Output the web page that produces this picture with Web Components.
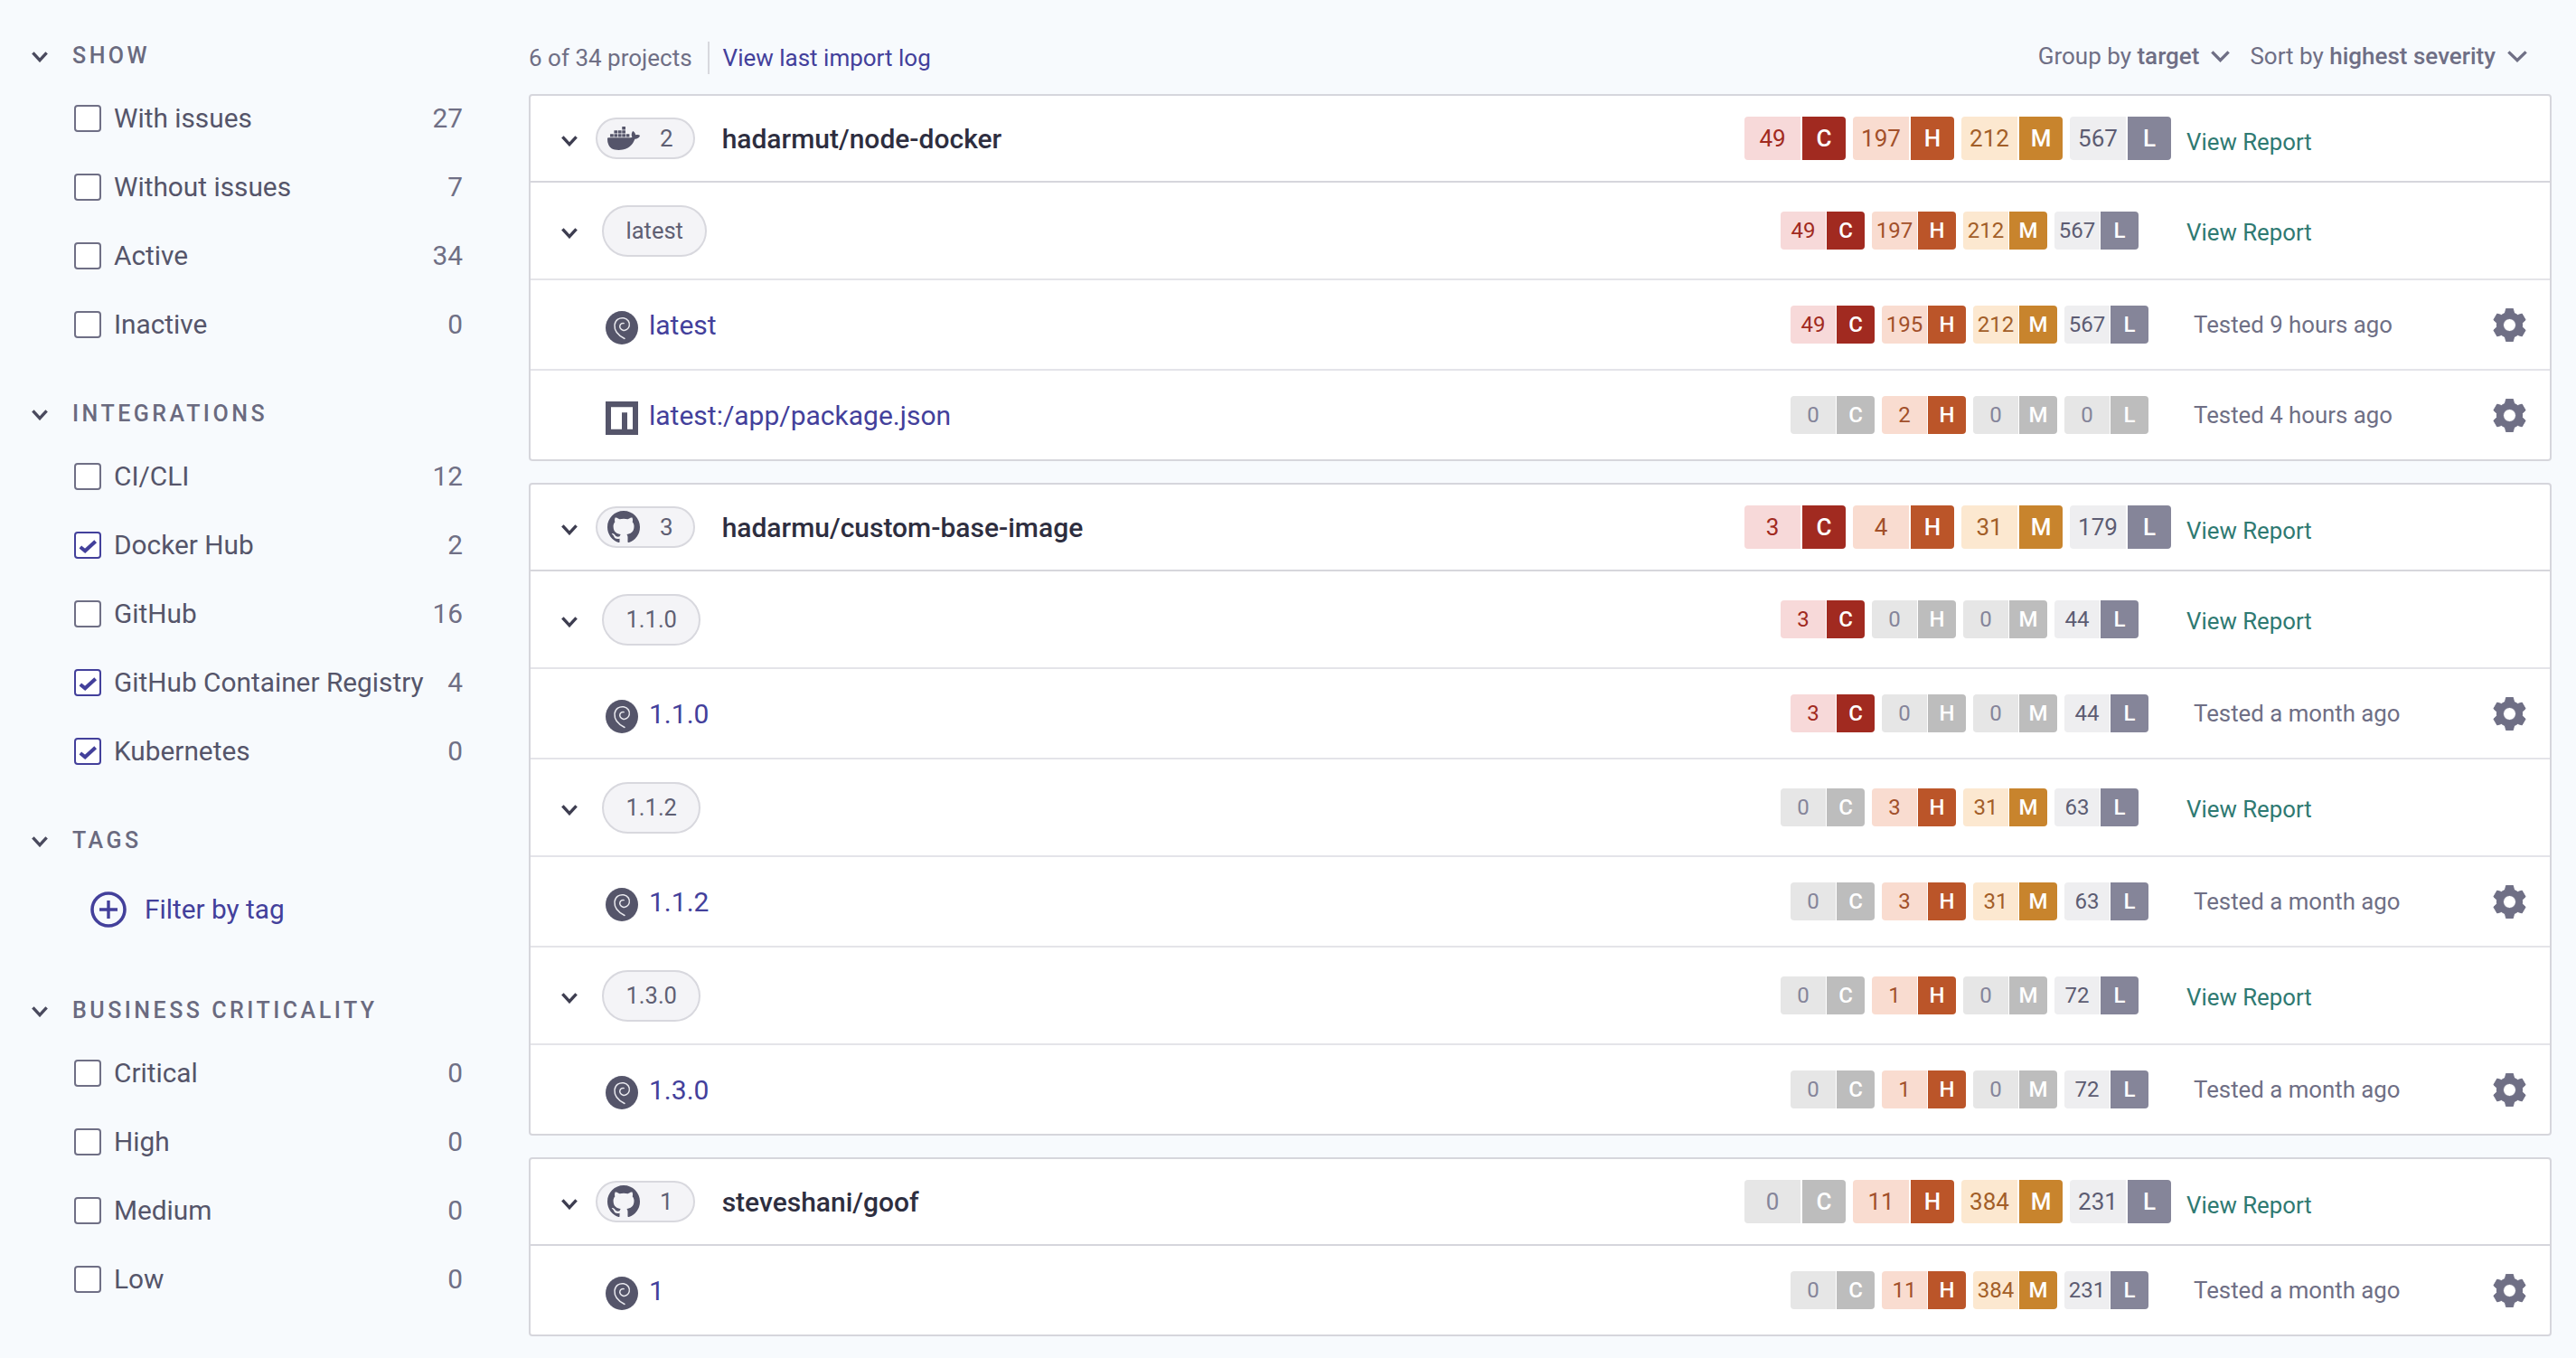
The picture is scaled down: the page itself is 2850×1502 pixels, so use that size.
<!DOCTYPE html>
<html><head><meta charset="utf-8">
<style>
html,body{margin:0;padding:0;background:#f7fafd;font-family:Roboto,"Liberation Sans",sans-serif;color:#55556a}
body{height:1502px;overflow:hidden}
</style></head><body>
<x-app>
  <x-filter-section slot="side" heading="SHOW" style="margin-bottom:41px">
    <x-check count="27">With issues</x-check>
    <x-check count="7">Without issues</x-check>
    <x-check count="34">Active</x-check>
    <x-check count="0">Inactive</x-check>
  </x-filter-section>
  <x-filter-section slot="side" heading="INTEGRATIONS" style="margin-bottom:41px">
    <x-check count="12">CI/CLI</x-check>
    <x-check count="2" checked>Docker Hub</x-check>
    <x-check count="16">GitHub</x-check>
    <x-check count="4" checked>GitHub Container Registry</x-check>
    <x-check count="0" checked>Kubernetes</x-check>
  </x-filter-section>
  <x-filter-section slot="side" heading="TAGS" gap="18" style="margin-bottom:54px">
    <x-add-filter>Filter by tag</x-add-filter>
  </x-filter-section>
  <x-filter-section slot="side" heading="BUSINESS CRITICALITY">
    <x-check count="0">Critical</x-check>
    <x-check count="0">High</x-check>
    <x-check count="0">Medium</x-check>
    <x-check count="0">Low</x-check>
  </x-filter-section>

  <x-topbar slot="main"></x-topbar>

  <x-card slot="main">
    <x-row kind="project" icon="docker" count="2" sev="49,197,212,567">hadarmut/node-docker</x-row>
    <x-row kind="tag" sev="49,197,212,567">latest</x-row>
    <x-row kind="leaf" icon="debian" sev="49,195,212,567" tested="Tested 9 hours ago">latest</x-row>
    <x-row kind="leaf" icon="npm" sev="0,2,0,0" tested="Tested 4 hours ago" last>latest:/app/package.json</x-row>
  </x-card>
  <x-card slot="main">
    <x-row kind="project" icon="github" count="3" sev="3,4,31,179">hadarmu/custom-base-image</x-row>
    <x-row kind="tag" sev="3,0,0,44">1.1.0</x-row>
    <x-row kind="leaf" icon="debian" sev="3,0,0,44" tested="Tested a month ago">1.1.0</x-row>
    <x-row kind="tag" sev="0,3,31,63">1.1.2</x-row>
    <x-row kind="leaf" icon="debian" sev="0,3,31,63" tested="Tested a month ago">1.1.2</x-row>
    <x-row kind="tag" sev="0,1,0,72">1.3.0</x-row>
    <x-row kind="leaf" icon="debian" sev="0,1,0,72" tested="Tested a month ago" last>1.3.0</x-row>
  </x-card>
  <x-card slot="main">
    <x-row kind="project" icon="github" count="1" sev="0,11,384,231">steveshani/goof</x-row>
    <x-row kind="leaf" icon="debian" sev="0,11,384,231" tested="Tested a month ago" last>1</x-row>
  </x-card>
</x-app>
<script>
const ICONS={
 docker:'<svg viewBox="0 0 24 24" width="36" height="36" fill="#55556a"><path d="M13.983 11.078h2.119a.186.186 0 00.186-.185V9.006a.186.186 0 00-.186-.186h-2.119a.185.185 0 00-.185.185v1.888c0 .102.083.185.185.185m-2.954-5.43h2.118a.186.186 0 00.186-.186V3.574a.186.186 0 00-.186-.185h-2.118a.185.185 0 00-.185.185v1.888c0 .102.082.185.185.186m0 2.716h2.118a.187.187 0 00.186-.186V6.29a.186.186 0 00-.186-.185h-2.118a.185.185 0 00-.185.185v1.887c0 .102.082.185.185.186m-2.93 0h2.12a.186.186 0 00.184-.186V6.29a.185.185 0 00-.185-.185H8.1a.185.185 0 00-.185.185v1.887c0 .102.083.185.185.186m-2.964 0h2.119a.186.186 0 00.185-.186V6.29a.185.185 0 00-.185-.185H5.136a.186.186 0 00-.186.185v1.887c0 .102.084.185.186.186m5.893 2.715h2.118a.186.186 0 00.186-.185V9.006a.186.186 0 00-.186-.186h-2.118a.185.185 0 00-.185.185v1.888c0 .102.082.185.185.185m-2.93 0h2.12a.185.185 0 00.184-.185V9.006a.185.185 0 00-.184-.186h-2.12a.185.185 0 00-.184.185v1.888c0 .102.083.185.185.185m-2.964 0h2.119a.185.185 0 00.185-.185V9.006a.185.185 0 00-.184-.186h-2.12a.186.186 0 00-.186.186v1.887c0 .102.084.185.186.185m-2.92 0h2.12a.185.185 0 00.184-.185V9.006a.185.185 0 00-.184-.186h-2.12a.185.185 0 00-.185.185v1.888c0 .102.082.185.185.185M23.763 9.89c-.065-.051-.672-.51-1.954-.51-.338.001-.676.03-1.01.087-.248-1.7-1.653-2.53-1.716-2.566l-.344-.199-.226.327c-.284.438-.49.922-.612 1.43-.23.97-.09 1.882.403 2.661-.595.332-1.55.413-1.744.42H.751a.751.751 0 00-.75.748 11.376 11.376 0 00.692 4.062c.545 1.428 1.355 2.48 2.41 3.124 1.18.723 3.1 1.137 5.275 1.137.983.003 1.963-.086 2.93-.266a12.248 12.248 0 003.823-1.389c.98-.567 1.86-1.288 2.61-2.136 1.252-1.418 1.998-2.997 2.553-4.4h.221c1.372 0 2.215-.549 2.68-1.009.309-.293.55-.65.707-1.046l.098-.288Z"/></svg>',
 github:'<svg viewBox="0 0 16 16" width="36" height="36" fill="#55556a"><path d="M8 0C3.58 0 0 3.58 0 8c0 3.54 2.29 6.53 5.47 7.59.4.07.55-.17.55-.38 0-.19-.01-.82-.01-1.49-2.01.37-2.53-.49-2.69-.94-.09-.23-.48-.94-.82-1.13-.28-.15-.68-.52-.01-.53.63-.01 1.08.58 1.23.82.72 1.21 1.87.87 2.33.66.07-.52.28-.87.51-1.07-1.78-.2-3.64-.89-3.64-3.95 0-.87.31-1.59.82-2.15-.08-.2-.36-1.02.08-2.12 0 0 .67-.21 2.2.82.64-.18 1.32-.27 2-.27.68 0 1.36.09 2 .27 1.53-1.04 2.2-.82 2.2-.82.44 1.1.16 1.92.08 2.12.51.56.82 1.27.82 2.15 0 3.07-1.87 3.75-3.65 3.95.29.25.54.73.54 1.48 0 1.07-.01 1.93-.01 2.2 0 .21.15.46.55.38A8.013 8.013 0 0016 8c0-4.42-3.58-8-8-8z"/></svg>',
 debian:'<svg viewBox="0 0 36 37" width="36" height="37"><ellipse cx="18" cy="18.5" rx="18" ry="18.5" fill="#55556a"/><path d="M21 30.5C14 27 9.5 22 10 15.5 10.6 9.8 15.5 7 20 7.8c4.6.8 7.2 4.8 6.2 8.8-.9 3.4-4 5.4-7 4.6-2.5-.7-4-3-3.3-5.2.6-1.9 2.5-3 4.3-2.4" fill="none" stroke="#e9e9ee" stroke-width="1.5" stroke-linecap="round"/></svg>',
 npm:'<svg viewBox="0 0 18 18" width="36" height="37" preserveAspectRatio="none"><path fill="#55556a" d="M0 0h18v18H0z"/><path fill="#fff" d="M3 3h12v12h-3V6H9v9H3z"/></svg>'
};
function gearPath(){
  const cx=18.5,cy=18.5,R=18.5,r=14.2;let d='';
  for(let i=0;i<6;i++){
    const a=-Math.PI/2+i*Math.PI/3;
    const pt=(rad,off)=>[(cx+rad*Math.cos(a+off)).toFixed(2),(cy+rad*Math.sin(a+off)).toFixed(2)].join(' ');
    d+=(i?'L':'M')+pt(r,-0.36)+'L'+pt(R,-0.21)+'L'+pt(R,0.21)+'L'+pt(r,0.36);
  }
  return d+'Z';
}
ICONS.gear=`<svg viewBox="0 0 37 37" width="37" height="37"><path fill="#6f6f85" stroke="#6f6f85" stroke-width="1" stroke-linejoin="round" fill-rule="evenodd" d="${gearPath()}M18.5 11.5a7 7 0 1 0 0 14a7 7 0 1 0 0-14Z"/></svg>`;
const chev=(w,h,c,s)=>`<svg width="${w}" height="${h}" viewBox="0 0 ${w} ${h}" style="display:block"><path d="M${s*.7} ${s*.7}L${w/2} ${h-s*.7}L${w-s*.7} ${s*.7}" fill="none" stroke="${c}" stroke-width="${s}"/></svg>`;
function def(name,html){
  customElements.define(name,class extends HTMLElement{
    connectedCallback(){
      if(this.shadowRoot)return;
      this.attachShadow({mode:'open'}).innerHTML=typeof html==='function'?html(this):html;
    }
  });
}
def('x-app',`<style>
:host{display:grid;grid-template-columns:585px 1fr;width:2850px;box-sizing:border-box;padding-right:27px}
.side{padding-top:42px}
.main{padding-top:42px;min-width:0}
</style><div class="side"><slot name="side"></slot></div><div class="main"><slot name="main"></slot></div>`);
def('x-filter-section',el=>`<style>
:host{display:block;padding-left:34px}
.h{display:flex;align-items:center;height:40px;font:500 25px/40px Roboto,sans-serif;letter-spacing:3.5px;color:#6a6a7f;gap:26px}
.b{margin-top:${el.getAttribute('gap')||11}px;padding-left:48px;padding-right:73px}
</style><div class="h">${chev(20,13,'#4a4a5e',3.4)}<span>${el.getAttribute('heading')}</span></div><div class="b"><slot></slot></div>`);
def('x-check',el=>{
 const on=el.hasAttribute('checked');
 return `<style>
:host{display:flex;align-items:center;height:76px;font:400 29.8px/76px Roboto,sans-serif;color:#55556a}
.c{width:30px;height:30px;box-sizing:border-box;border:${on?'2.5px solid #43409b':'2px solid #6f6f85'};border-radius:4px;background:#fff;margin-right:14px;flex:none;display:flex;align-items:center;justify-content:center}
.l{flex:1;white-space:nowrap}
.n{color:#6f6f85}
</style><span class="c">${on?'<svg viewBox="0 0 26 26" width="25" height="25" style="display:block"><path d="M4 14.5l5.5 4.5L21.5 8" fill="none" stroke="#43409b" stroke-width="4.2"/></svg>':''}</span><span class="l"><slot></slot></span><span class="n">${el.getAttribute('count')}</span>`;
});
def('x-add-filter',`<style>
:host{display:flex;align-items:center;height:76px;padding-left:18px;gap:20px;font:400 29.8px/76px Roboto,sans-serif;color:#43409b}
svg{display:block}
</style><svg width="40" height="40" viewBox="0 0 40 40"><circle cx="20" cy="20" r="18" fill="none" stroke="#43409b" stroke-width="3.6"/><path d="M10 20h20M20 10v20" stroke="#43409b" stroke-width="3.4"/></svg><span><slot></slot></span>`);
def('x-topbar',`<style>
:host{display:flex;align-items:center;height:44px;margin-bottom:18px;padding-right:26px;font:400 26px/36px Roboto,sans-serif;color:#6f6f85}
.sep{width:2px;height:36px;background:#d8d8de;margin:0 15px 0 17px}
a{color:#43409b;text-decoration:none}
.sp{flex:1}
b{font-weight:500}
.g{display:flex;align-items:center;gap:12px;margin-left:21px;margin-bottom:4px}
</style><span>6 of 34 projects</span><span class="sep"></span><a>View last import log</a><span class="sp"></span>
<span class="g"><span>Group by <b>target</b></span>${chev(23,14,'#6f6f85',3.4)}</span>
<span class="g"><span>Sort by <b>highest severity</b></span>${chev(24,14,'#6f6f85',3.4)}</span>`);
def('x-card',`<style>:host{display:block;background:#fff;border:2px solid #d6d6dc;border-radius:4px;margin-bottom:24px}</style><slot></slot>`);
def('x-sev',el=>{
 const lg=el.getAttribute('size')==='lg';
 const v=el.getAttribute('values').split(',');
 const L=['C','H','M','L'],k=['c','h','m','l'];
 return `<style>
:host{display:flex;gap:8px}
.s{display:flex;gap:${lg?2:1}px;height:${lg?48:42}px;font:400 ${lg?26:24}px/${lg?48:42}px Roboto,sans-serif;text-align:center}
.n{width:${lg?62:50}px;border-radius:4px 0 0 4px}
.t{width:${lg?48:42}px;border-radius:0 4px 4px 0;color:#fff;font-weight:500}
.c .n{background:#f7d9d9;color:#a12a20}.c .t{background:#a12a20}
.h .n{background:#f9dcd0;color:#a2502a}.h .t{background:#bb5529}
.m .n{background:#fce8d0;color:#a25e28}.m .t{background:#c8842d}
.l .n{background:#eeeef0;color:#5c5c72}.l .t{background:#858599}
.z .n{background:#e6e6e6;color:#85859a}.z .t{background:#bdbdbd}
</style>`+v.map((x,i)=>`<div class="s ${x==='0'?'z':k[i]}"><div class="n">${x}</div><div class="t">${L[i]}</div></div>`).join('');
});
def('x-row',el=>{
 const kind=el.getAttribute('kind');
 const sev=el.getAttribute('sev');
 const last=el.hasAttribute('last');
 const ic=ICONS[el.getAttribute('icon')]||'';
 let lead='',tail='';
 if(kind==='project'){
  lead=`<span class="chev">${chev(20,13,'#3d3d50',3.4)}</span><span class="pill p1"><span class="ic">${ic}</span><span>${el.getAttribute('count')}</span></span><span class="name"><slot></slot></span>`;
  tail=`<a class="rep" style="margin-left:17px;padding-top:8px;width:402px">View Report</a>`;
 }else if(kind==='tag'){
  lead=`<span class="chev">${chev(20,13,'#3d3d50',3.4)}</span><span class="pill p2"><slot></slot></span>`;
  tail=`<a class="rep" style="margin-left:53px;padding-top:4px;width:402px">View Report</a>`;
 }else{
  lead=`<span class="ic leaf">${ic}</span><a class="lk"><slot></slot></a>`;
  tail=`<span class="t"><span class="tt">${el.getAttribute('tested')}</span><span class="gear">${ICONS.gear}</span></span>`;
 }
 const h={project:96,tag:108,leaf:last?98:100}[kind];
 const size=kind==='project'?'lg':'md';
 return `<style>
:host{display:flex;align-items:center;height:${h}px;box-sizing:border-box;${last?'':`border-bottom:2px solid ${kind==='project'?'#d6d6dc':'#e4e4e9'};`}padding-left:33px}
svg{display:block}
.chev{width:20px;flex:none;margin-top:4px}
.pill{display:flex;align-items:center;box-sizing:border-box;background:#f4f4f7;border:2px solid #d8d8de;border-radius:999px;color:#5f5f73;white-space:nowrap}
.p1{height:46px;margin-left:19px;padding:0 22px 0 11px;gap:22px;font:400 26px/42px Roboto,sans-serif}
.p2{height:57px;margin-left:26px;padding:0 24.5px;font:400 25.5px/53px Roboto,sans-serif}
.name{margin-left:30px;padding-top:1px;font:500 30px/40px Roboto,sans-serif;color:#2e2e3f;white-space:nowrap}
.leaf{margin-left:50px;margin-top:6px}
.lk{margin-left:12px;padding-top:2px;font:400 30px/40px Roboto,sans-serif;color:#43409b;white-space:nowrap}
.sp{flex:1}
.rep{display:block;box-sizing:border-box;font:400 25.8px/34px Roboto,sans-serif;color:#2f7a72}
.t{display:flex;align-items:center;justify-content:space-between;width:394px;margin-left:50px;padding-right:26px;box-sizing:border-box;font:400 25.8px/34px Roboto,sans-serif;color:#6f6f85}
</style>${lead}<span class="sp"></span><x-sev size="${size}" values="${sev}"></x-sev>${tail}`;
});
</script>
</body></html>
